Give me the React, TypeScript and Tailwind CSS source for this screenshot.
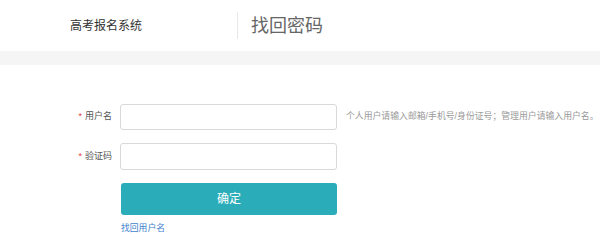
export default function App() {
  return (
    <div
      className="w-[600px] h-[248px] bg-white overflow-hidden"
      style={{ fontFamily: '"Liberation Sans", "Noto Sans CJK SC", sans-serif' }}
    >
      {/* Header */}
      <div className="h-[51px] flex items-center">
        <div className="w-[237px] pl-[70px] text-[12px] text-[#333]">高考报名系统</div>
        <div className="w-px h-[27px] bg-[#e8e8e8]" />
        <div className="pl-[13px] text-[18px] text-[#666] leading-none">找回密码</div>
      </div>
      <div className="h-[14px] bg-[#f5f5f5]" />

      {/* Form */}
      <div className="pt-[39px] flex flex-col">
        <div className="flex items-center h-[26px]">
          <div className="w-[120px] pr-[8px] flex justify-end items-center gap-[3px] text-[9px] text-[#555]">
            <span className="text-[#e4393c]">*</span>
            <span>用户名</span>
          </div>
          <input className="w-[217px] h-[26px] border border-[#d9d9d9] rounded-[3px] outline-none px-2 text-[10px]" />
          <div className="pl-[9px] text-[8.85px] text-[#999] whitespace-nowrap">
            个人用户请输入邮箱/手机号/身份证号；管理用户请输入用户名。
          </div>
        </div>
        <div className="flex items-center h-[27px] mt-[13px]">
          <div className="w-[120px] pr-[8px] flex justify-end items-center gap-[3px] text-[9px] text-[#555]">
            <span className="text-[#e4393c]">*</span>
            <span>验证码</span>
          </div>
          <input className="w-[217px] h-[27px] border border-[#d9d9d9] rounded-[3px] outline-none px-2 text-[10px]" />
        </div>
        <div className="pl-[121px] mt-[13px]">
          <button className="w-[216px] h-[32px] bg-[#2badb9] rounded-[3px] text-white text-[12px]">确定</button>
        </div>
        <div className="pl-[121px] mt-[9px] text-[8.8px] leading-none">
          <a className="text-[#3f7fcf]">找回用户名</a>
        </div>
      </div>
    </div>
  );
}
